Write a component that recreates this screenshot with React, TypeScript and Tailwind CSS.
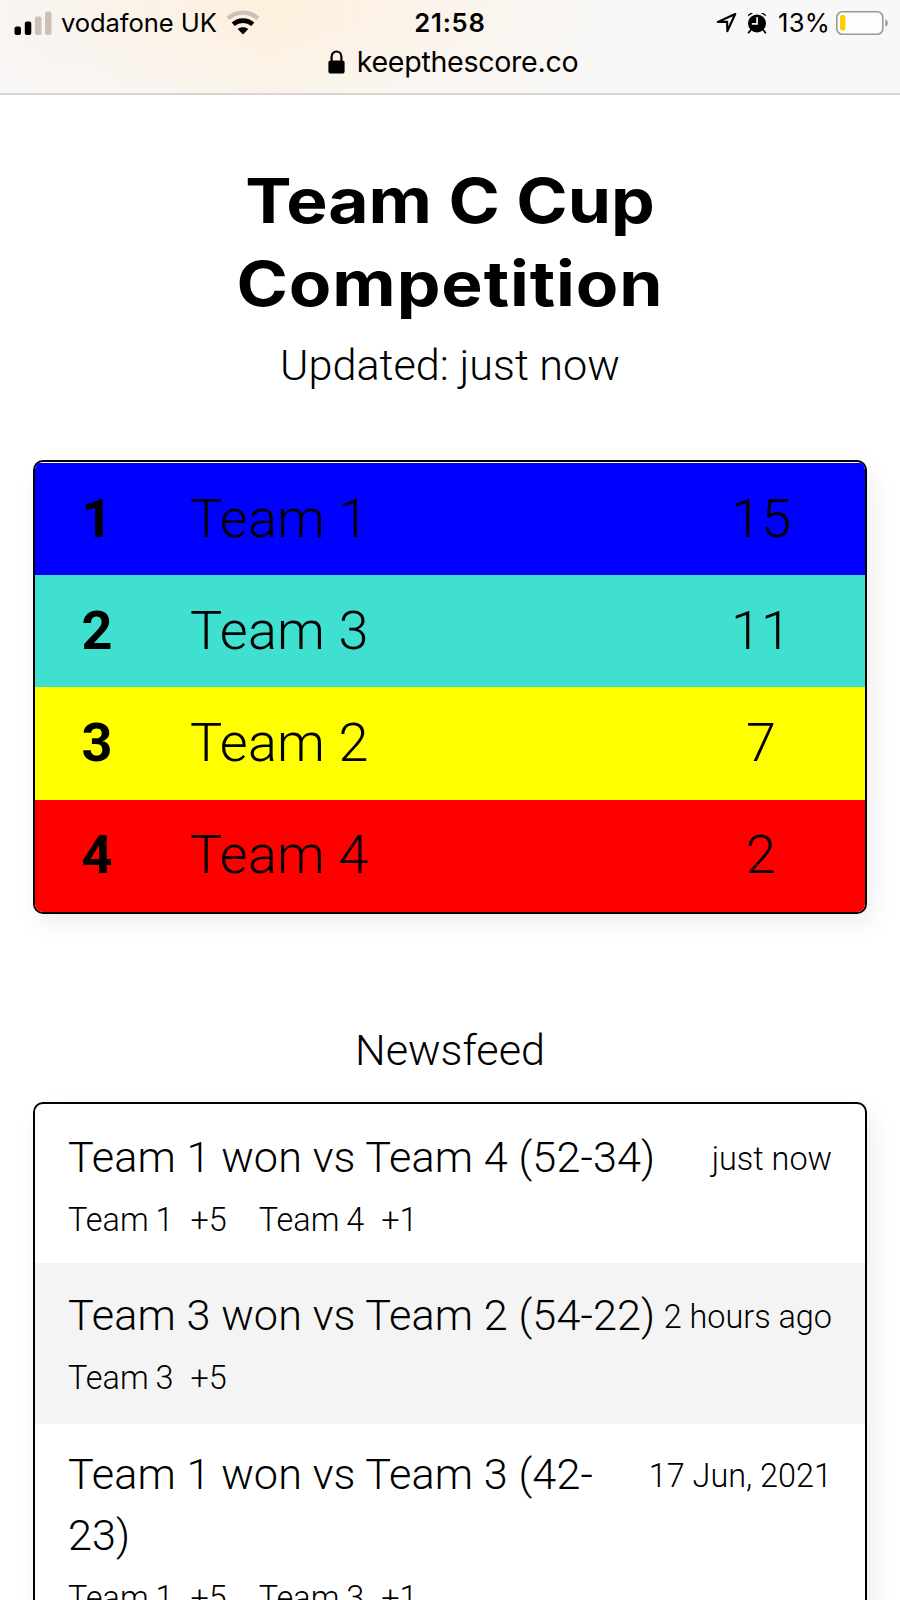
interface Standing {
  rank: number;
  name: string;
  score: number;
  color: string;
}

interface NewsItem {
  title: string;
  time: string;
  changes: { name: string; points: string }[];
}

const standings: Standing[] = [
  { rank: 1, name: "Team 1", score: 15, color: "bg-[#0000ff]" },
  { rank: 2, name: "Team 3", score: 11, color: "bg-[#40e0d0]" },
  { rank: 3, name: "Team 2", score: 7, color: "bg-[#ffff00]" },
  { rank: 4, name: "Team 4", score: 2, color: "bg-[#ff0000]" },
];

const news: NewsItem[] = [
  {
    title: "Team 1 won vs Team 4 (52-34)",
    time: "just now",
    changes: [
      { name: "Team 1", points: "+5" },
      { name: "Team 4", points: "+1" },
    ],
  },
  {
    title: "Team 3 won vs Team 2 (54-22)",
    time: "2 hours ago",
    changes: [{ name: "Team 3", points: "+5" }],
  },
  {
    title: "Team 1 won vs Team 3 (42-23)",
    time: "17 Jun, 2021",
    changes: [
      { name: "Team 1", points: "+5" },
      { name: "Team 3", points: "+1" },
    ],
  },
];

const SignalIcon = () => (
  <svg width="38" height="24" viewBox="0 0 38 24">
    <rect x="0.5" y="15.5" width="6.5" height="8.5" rx="2" fill="#000" />
    <rect x="10.8" y="10.5" width="6.5" height="13.5" rx="2" fill="#000" />
    <rect x="21" y="5.5" width="6.5" height="18.5" rx="2" fill="#cbc1b8" />
    <rect x="31" y="0.5" width="6.5" height="23.5" rx="2" fill="#cbc1b8" />
  </svg>
);

const WifiIcon = () => (
  <svg width="34" height="26" viewBox="0 0 34 26" fill="none">
    <path d="M2 8.300C10.5.7 23.5.7 32 8.300" stroke="#cbc1b8" strokeWidth="4.4" />
    <path d="M7.2 14.3C12.8 9.4 21.2 9.4 26.8 14.3" stroke="#000" strokeWidth="4.6" />
    <path d="M11.7 19c3-2.5 7.6-2.5 10.6 0L17 24.600z" fill="#000" />
  </svg>
);

const LockIcon = () => (
  <svg width="17" height="24" viewBox="0 0 17 24">
    <path d="M3.6 12V6.8a4.9 5.3 0 0 1 9.8 0V12" fill="none" stroke="#000" strokeWidth="2.2" />
    <rect x="0.4" y="10.4" width="16.2" height="13.2" rx="2.2" fill="#000" />
  </svg>
);

const LocationIcon = () => (
  <svg width="22" height="22" viewBox="0 0 22 22" fill="none">
    <path
      d="M19.2 2L1.8 9.9h9.3l.3 9.2z"
      stroke="#000"
      strokeWidth="2.2"
      strokeLinejoin="round"
    />
  </svg>
);

const AlarmIcon = () => (
  <svg width="20" height="22" viewBox="0 0 20 22" fill="none">
    <circle cx="10" cy="11.4" r="9" fill="#000" />
    <path d="M.8 4.4C1 1.8 3.6.2 6 1.2zM19.2 4.4C19 1.8 16.4.2 14 1.2z" fill="#000" />
    <path d="M3.8 18l-2.2 2.6M16.2 18l2.2 2.6" stroke="#000" strokeWidth="1.8" strokeLinecap="round" />
    <path d="M10.1 5.8v6.1H5.6" stroke="#f8f8f8" strokeWidth="1.7" strokeLinecap="round" />
  </svg>
);

const BatteryIcon = () => (
  <svg width="53" height="24" viewBox="0 0 53 24">
    <rect x="0.8" y="0.8" width="46" height="22.4" rx="5.5" fill="#fdfdfd" stroke="#999" strokeWidth="1.6" />
    <rect x="4" y="4" width="5.4" height="15.6" rx="2" fill="#ffcc00" />
    <path d="M49.4 8.2c3.2.8 3.2 6.800 0 7.6z" fill="#999" />
  </svg>
);

const BrowserBar = () => (
  <header className="relative h-[95px] border-b-2 border-[#d9d7d6] bg-linear-to-r from-[#f8f5f3] via-[#fef0de] via-30% to-[#f8f8f8] to-70% font-['Inter'] font-normal text-black">
    <div className="absolute inset-0 bg-linear-to-b from-transparent from-20% to-[#f8f8f8]/50" />
    <div className="relative grid h-[46px] grid-cols-[1fr_auto_1fr] items-center">
      <div className="flex items-center pl-[14px]">
        <SignalIcon />
        <span className="ml-[9px] w-[157px] text-[25.6px] tracking-[-0.1px] whitespace-nowrap">vodafone UK</span>
        <span className="ml-[8px]">
          <WifiIcon />
        </span>
      </div>
      <span className="text-[25.6px] font-semibold tracking-[0.8px]">21:58</span>
      <div className="flex items-center justify-end pr-[11px]">
        <LocationIcon />
        <span className="ml-[9px]">
          <AlarmIcon />
        </span>
        <span className="ml-[11px] text-[25.6px] tracking-[0.2px]">13%</span>
        <span className="ml-[6px]">
          <BatteryIcon />
        </span>
      </div>
    </div>
    <div className="relative flex h-[32px] items-center justify-center pl-[6px]">
      <LockIcon />
      <span className="ml-[12px] text-[28.6px] tracking-[-0.3px]">keepthescore.co</span>
    </div>
  </header>
);

const ScoreTable = () => (
  <div className="mx-[33px] mt-[64px] overflow-hidden rounded-[10px] border-2 border-black bg-white pt-px shadow-[6px_10px_24px_rgba(0,0,0,0.07)]">
    {standings.map((team) => (
      <div
        key={team.rank}
        className={`flex h-[112.2px] items-center pb-[2px] text-[54px] ${team.color}`}
      >
        <span className="w-[124px] text-center font-bold">{team.rank}</span>
        <span className="ml-[31px] flex-1 tracking-[0.2px]">{team.name}</span>
        <span className="mr-[42px] w-[124px] text-center">{team.score}</span>
      </div>
    ))}
  </div>
);

const Newsfeed = () => (
  <div className="mx-[33px] mt-[21px] rounded-[10px] border-2 border-black bg-white shadow-[6px_10px_24px_rgba(0,0,0,0.07)]">
    {news.map((item) => (
      <div
        key={item.title}
        className="h-[159px] px-[33px] pt-[23px] last:h-auto last:pt-[20px] last:pb-6 even:h-[161px] even:bg-[#f4f4f4] even:pt-[22px]"
      >
        <div className="flex justify-between">
          <p className="text-[43.2px] leading-[61px] tracking-[0.1px]">{item.title}</p>
          <span className="shrink-0 pt-[4px] text-[32.4px] leading-[57px]">{item.time}</span>
        </div>
        <div className="mt-[8px] flex gap-[32px] text-[32.4px] leading-[48px] [word-spacing:-1px]">
          {item.changes.map((change) => (
            <span key={change.name} className="flex gap-[17px]">
              <span>{change.name}</span>
              <span>{change.points}</span>
            </span>
          ))}
        </div>
      </div>
    ))}
  </div>
);

export default function App() {
  return (
    <div className="h-[1600px] w-[900px] overflow-hidden bg-white font-['Roboto'] font-light text-black">
      <BrowserBar />
      <h1 className="mt-[64px] scale-x-113 text-center font-['Inter'] text-[61.5px] leading-[83px] font-bold">
        <span className="block">Team C Cup</span>
        <span className="block tracking-[0.8px]">Competition</span>
      </h1>
      <p className="mt-[10px] text-center text-[43.2px] leading-[61px]">Updated: just now</p>
      <ScoreTable />
      <h2 className="mt-[106px] text-center text-[43.2px] leading-[61px]">Newsfeed</h2>
      <Newsfeed />
    </div>
  );
}
